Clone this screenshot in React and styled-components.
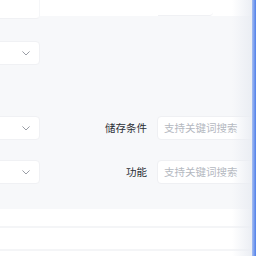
import React from "react";
import styled, { createGlobalStyle } from "styled-components";

const Global = createGlobalStyle`
  html, body { margin: 0; padding: 0; background: #ffffff; }
  body { font-family: "Noto Sans CJK SC", "Noto Sans", sans-serif; }
`;

const Page = styled.div`
  position: relative;
  width: 256px;
  height: 256px;
  overflow: hidden;
  background: #ffffff;
`;

const TopStrip = styled.div`
  position: relative;
  z-index: 1;
  display: flex;
  align-items: flex-start;
  height: 16px;
  background: #ffffff;
`;

const CutBox = styled.div`
  flex: none;
  width: ${(p) => p.$w}px;
  height: ${(p) => p.$h}px;
  margin-left: ${(p) => p.$ml || 0}px;
  background: #ffffff;
  border-bottom: 1px solid #f0f1f4;
  border-right: ${(p) => (p.$right ? "1px solid #f5f6f8" : "none")};
  border-radius: 0 0 4px 0;
  box-sizing: border-box;
`;

const Panel = styled.div`
  height: 193px;
  background: #f7f8fa;
  box-sizing: border-box;
  padding-top: 25px;
  display: flex;
  flex-direction: column;
`;

const Row = styled.div`
  display: flex;
  align-items: center;
  height: 24px;
  margin-top: ${(p) => p.$mt || 0}px;
`;

const Select = styled.div`
  flex: none;
  width: 48px;
  height: 24px;
  margin-left: -8px;
  background: #ffffff;
  border: 1px solid #f0f1f4;
  border-radius: 4px;
  box-sizing: border-box;
  display: flex;
  align-items: center;
  justify-content: flex-end;
  padding-right: 9px;
`;

const Label = styled.div`
  flex: none;
  width: 117px;
  text-align: right;
  font-size: 10.5px;
  line-height: 24px;
  color: #2b2f36;
  padding-right: 10px;
  box-sizing: border-box;
`;

const Input = styled.div`
  flex: none;
  width: 120px;
  height: 24px;
  background: #ffffff;
  border: 1px solid #eff0f3;
  border-radius: 4px;
  box-sizing: border-box;
  padding-left: 6px;
  font-size: 10.5px;
  line-height: 22px;
  color: #b4b8bf;
  white-space: nowrap;
`;

const Bottom = styled.div`
  display: flex;
  flex-direction: column;
`;

const Line = styled.div`
  height: 2px;
  background: #f4f5f7;
  margin-top: ${(p) => p.$mt}px;
`;

const EdgeShade = styled.div`
  position: absolute;
  top: 0;
  right: 4px;
  width: 20px;
  height: 256px;
  z-index: 2;
  background: linear-gradient(to right, rgba(240, 242, 246, 0), rgba(234, 237, 243, 0.95));
`;

const EdgeBar = styled.div`
  position: absolute;
  top: 0;
  right: 0;
  width: 4px;
  height: 256px;
  z-index: 3;
  background: linear-gradient(to right, #a9c0f3, #4f7fe9);
`;

const Chevron = () => (
  <svg width="8" height="5" viewBox="0 0 8 5" fill="none">
    <path d="M0.7 0.7 L4 4 L7.3 0.7" stroke="#9a9ea6" strokeWidth="1" strokeLinecap="round" strokeLinejoin="round" />
  </svg>
);

export default function App() {
  return (
    <Page>
      <Global />
      <TopStrip>
        <CutBox $w={40} $h={19} $right />
        <CutBox $w={55} $h={16} $ml={118} />
      </TopStrip>
      <Panel>
        <Row>
          <Select><Chevron /></Select>
        </Row>
        <Row $mt={51}>
          <Select><Chevron /></Select>
          <Label>储存条件</Label>
          <Input>支持关键词搜索</Input>
        </Row>
        <Row $mt={20}>
          <Select><Chevron /></Select>
          <Label>功能</Label>
          <Input>支持关键词搜索</Input>
        </Row>
      </Panel>
      <Bottom>
        <Line $mt={17} />
        <Line $mt={21} />
      </Bottom>
      <EdgeShade />
      <EdgeBar />
    </Page>
  );
}
